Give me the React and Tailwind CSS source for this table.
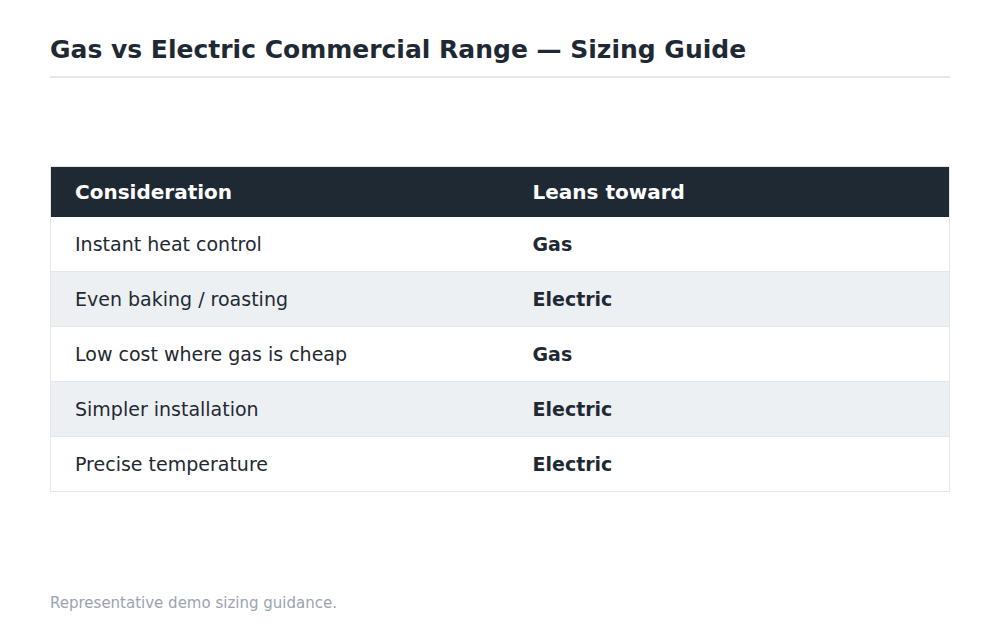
import React from "react";

const rows = [
  ["Instant heat control", "Gas"],
  ["Even baking / roasting", "Electric"],
  ["Low cost where gas is cheap", "Gas"],
  ["Simpler installation", "Electric"],
  ["Precise temperature", "Electric"],
];

export default function App() {
  return (
    <div
      className="w-[1000px] h-[634px] bg-white px-[50px] flex flex-col"
      style={{ fontFamily: '"DejaVu Sans", Verdana, sans-serif' }}
    >
      <div className="pt-[35px] pb-[11px] border-b-2 border-[#e5e7eb]">
        <h1 className="text-[25px] leading-[30px] font-bold text-[#1f2933]">
          Gas vs Electric Commercial Range — Sizing Guide
        </h1>
      </div>
      <div className="mt-[88px]">
        <table className="w-full border-collapse border border-[#e5e7eb]">
          <thead>
            <tr className="bg-[#1f2933] text-white h-[50px]">
              <th className="w-[482px] text-left font-bold text-[20px] pl-[24px]">Consideration</th>
              <th className="text-left font-bold text-[20px]">Leans toward</th>
            </tr>
          </thead>
          <tbody>
            {rows.map(([a, b], i) => (
              <tr
                key={i}
                className={`h-[55px] border-b border-[#e5e7eb] ${i % 2 === 1 ? "bg-[#edf0f3]" : "bg-white"}`}
              >
                <td className="pl-[24px] text-[19px] text-[#1f2933]">{a}</td>
                <td className="text-[19px] font-bold text-[#1f2933]">{b}</td>
              </tr>
            ))}
          </tbody>
        </table>
      </div>
      <div className="mt-auto pb-[21px] text-[15px] leading-[20px] text-[#9ca3af]">
        Representative demo sizing guidance.
      </div>
    </div>
  );
}
